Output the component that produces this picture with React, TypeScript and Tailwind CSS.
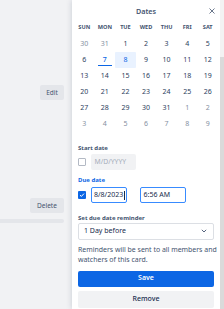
import React from "react";

const weeks: { n: number; out?: boolean }[][] = [
  [{ n: 30, out: true }, { n: 31, out: true }, { n: 1 }, { n: 2 }, { n: 3 }, { n: 4 }, { n: 5 }],
  [{ n: 6 }, { n: 7 }, { n: 8 }, { n: 9 }, { n: 10 }, { n: 11 }, { n: 12 }],
  [{ n: 13 }, { n: 14 }, { n: 15 }, { n: 16 }, { n: 17 }, { n: 18 }, { n: 19 }],
  [{ n: 20 }, { n: 21 }, { n: 22 }, { n: 23 }, { n: 24 }, { n: 25 }, { n: 26 }],
  [{ n: 27 }, { n: 28 }, { n: 29 }, { n: 30 }, { n: 31 }, { n: 1, out: true }, { n: 2, out: true }],
  [{ n: 3, out: true }, { n: 4, out: true }, { n: 5, out: true }, { n: 6, out: true }, { n: 7, out: true }, { n: 8, out: true }, { n: 9, out: true }],
];

const days = ["SUN", "MON", "TUE", "WED", "THU", "FRI", "SAT"];

export default function App() {
  return (
    <div className="w-[224px] h-[309px] bg-[#f1f2f4] flex overflow-hidden font-['Noto_Sans',sans-serif]">
      {/* left area */}
      <div className="w-[72px] flex flex-col shrink-0">
        <div className="mt-[85px] ml-[40px] w-[24px] h-[15px] rounded-[2px] bg-[#e4e6ea] text-[6.5px] text-[#44546f] flex items-center justify-center">
          Edit
        </div>
        <div className="mt-[98px] ml-[30px] w-[34px] h-[15px] rounded-[2px] bg-[#e4e6ea] text-[6.5px] text-[#44546f] flex items-center justify-center">
          Delete
        </div>
        <div className="mt-[6px] w-[64px] h-[4px] rounded-r-[2px] bg-[#e4e6ea]" />
      </div>

      {/* panel */}
      <div className="w-[148px] h-full bg-white shrink-0 shadow-[0_0_6px_rgba(9,30,66,0.18)] flex flex-col">
        <div className="h-[22px] relative flex items-center justify-center">
          <span className="text-[7.2px] font-semibold text-[#44546f]">Dates</span>
          <svg className="absolute right-[5px] top-[8px]" width="6" height="6" viewBox="0 0 6 6">
            <path d="M0.5 0.5 L5.5 5.5 M5.5 0.5 L0.5 5.5" stroke="#44546f" strokeWidth="0.8" />
          </svg>
        </div>
        <div className="grid grid-cols-7 px-[2px] h-[10px] items-center">
          {days.map((d) => (
            <div key={d} className="text-center text-[5.6px] font-bold text-[#44546f] leading-[10px]">
              {d}
            </div>
          ))}
        </div>
        <div className="mt-[3.5px] px-[2px] flex flex-col">
          {weeks.map((w, i) => (
            <div key={i} className="grid grid-cols-7 h-[16px]">
              {w.map((d, j) => {
                const sel = i === 1 && j === 2;
                const today = i === 1 && j === 1;
                return (
                  <div
                    key={j}
                    className={
                      "relative flex items-center justify-center text-[7px] leading-none " +
                      (sel
                        ? "bg-[#e9f2ff] text-[#0c66e4] rounded-[1px]"
                        : today
                        ? "text-[#0c66e4] font-medium"
                        : d.out
                        ? "text-[#8590a2]"
                        : "text-[#2c3e5d]")
                    }
                  >
                    {d.n}
                    {today && (
                      <div className="absolute left-[3px] right-[3px] bottom-[1.5px] h-[1px] bg-[#0c66e4]" />
                    )}
                  </div>
                );
              })}
            </div>
          ))}
        </div>

        <div className="px-[6px] flex flex-col">
          <div className="mt-[12.5px] h-[8px] leading-[8px] text-[6px] font-bold text-[#44546f]">Start date</div>
          <div className="mt-[2px] h-[16px] flex items-center">
            <div className="w-[8px] h-[8px] rounded-[1px] border border-[#b3b9c4] bg-white" />
            <div className="ml-[4.5px] w-[45px] h-[16px] rounded-[2px] bg-[#f1f2f4] flex items-center pl-[4px] text-[6.8px] text-[#a5adba]">
              M/D/YYYY
            </div>
          </div>

          <div className="mt-[6px] h-[8px] leading-[8px] text-[6px] font-bold text-[#0c66e4]">Due date</div>
          <div className="mt-[3px] h-[16px] flex items-center">
            <div className="w-[8px] h-[8px] rounded-[1px] bg-[#0c66e4] flex items-center justify-center">
              <svg width="6" height="6" viewBox="0 0 6 6">
                <path d="M1 3.1 L2.4 4.4 L5 1.6" stroke="white" strokeWidth="1" fill="none" />
              </svg>
            </div>
            <div className="ml-[4.5px] w-[36px] h-[16px] rounded-[2px] border-[1.5px] border-[#388bff] bg-white flex items-center pl-[2.5px] text-[7px] text-[#172b4d]">
              8/8/2023
              <div className="w-[0.7px] h-[9px] bg-[#172b4d] ml-[0.5px]" />
            </div>
            <div className="ml-[13px] w-[46px] h-[16px] rounded-[2px] border-[1.5px] border-[#388bff] bg-white flex items-center pl-[3px] text-[7px] text-[#172b4d]">
              6:56 AM
            </div>
          </div>

          <div className="mt-[11px] h-[8px] leading-[8px] text-[6px] font-bold text-[#44546f]">Set due date reminder</div>
          <div className="mt-[1px] h-[16.5px] rounded-[2px] border border-[#dcdfe4] bg-white flex items-center justify-between pl-[5px] pr-[6px] text-[7px] text-[#172b4d]">
            <span>1 Day before</span>
            <svg width="6" height="4" viewBox="0 0 6 4">
              <path d="M0.8 0.8 L3 3 L5.2 0.8" stroke="#44546f" strokeWidth="0.9" fill="none" />
            </svg>
          </div>

          <div className="mt-[5px] text-[6.95px] leading-[10.5px] text-[#44546f] whitespace-nowrap">
            Reminders will be sent to all members and
            <br />
            watchers of this card.
          </div>

          <div className="mt-[5px] h-[16px] rounded-[2px] bg-[#0c66e4] text-white text-[7px] font-semibold flex items-center justify-center">
            Save
          </div>
          <div className="mt-[4px] h-[17px] rounded-[2px] bg-[#f1f2f4] text-[#172b4d] text-[7px] font-medium flex items-center justify-center">
            Remove
          </div>
        </div>
      </div>

      {/* scrollbar */}
      <div className="w-[4px] h-full flex flex-col shrink-0">
        <div className="h-[57px] bg-[#f3f3f3]" />
        <div className="flex-1 bg-[#dadada]" />
      </div>
    </div>
  );
}
